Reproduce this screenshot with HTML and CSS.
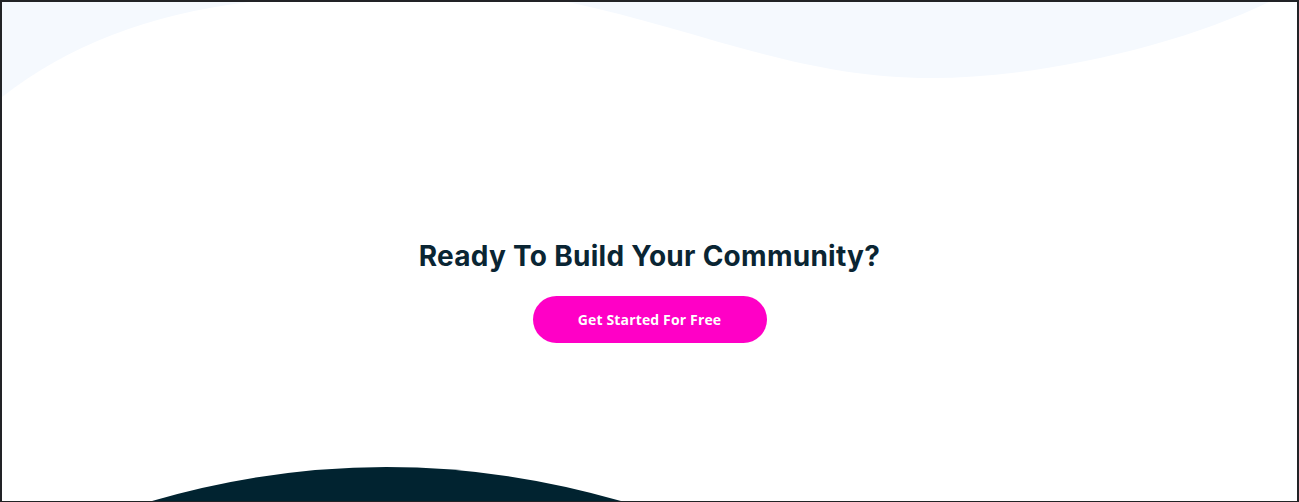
FILE: index.html
```html
<!DOCTYPE html>
<html lang="en">
<head>
<meta charset="utf-8">
<title>Ready To Build Your Community?</title>
<link rel="stylesheet" href="styles.css">
</head>
<body>
<div class="frame">
  <svg class="shapes" viewBox="0 0 1295 499" preserveAspectRatio="none" aria-hidden="true">
    <path class="wave" d="M0,0 L247,0 Q98,18 0,95 Z"/>
    <path class="wave" d="M566,0 C698,28 798,76 929,76 C1040,76 1178,43 1267,0 Z"/>
    <path class="hill" d="M150,499 Q384,431 619,499 Z"/>
  </svg>
  <section class="cta">
    <h2 class="cta-title">Ready To Build Your Community?</h2>
    <a class="cta-button" href="#">Get Started For Free</a>
  </section>
</div>
</body>
</html>
```

FILE: styles.css
```css
* { box-sizing: border-box; }
html, body { margin: 0; padding: 0; }
body { background: #ffffff; }
.frame {
  position: relative;
  width: 1299px;
  height: 502px;
  border-style: solid;
  border-color: #222326;
  border-width: 2px 2px 1px 2px;
  background: #ffffff;
  overflow: hidden;
}
.shapes {
  position: absolute;
  left: 0;
  top: 0;
  width: 1295px;
  height: 499px;
  display: block;
}
.wave { fill: #f5f9fe; }
.hill { fill: #012330; }
.cta {
  position: relative;
  display: flex;
  flex-direction: column;
  align-items: center;
  padding-top: 233px;
}
.cta-title {
  margin: 0;
  font-family: "Inter", "Noto Sans", sans-serif;
  font-weight: 700;
  font-size: 28px;
  line-height: 42px;
  color: #0a2533;
  letter-spacing: 0.27px;
}
.cta-button {
  margin-top: 19px;
  display: flex;
  align-items: center;
  justify-content: center;
  width: 234px;
  height: 47px;
  border-radius: 24px;
  background: #ff00c6;
  color: #ffffff;
  text-decoration: none;
  font-family: "Open Sans", "Noto Sans", sans-serif;
  font-weight: 700;
  font-size: 14px;
  letter-spacing: 0.15px;
}
```
